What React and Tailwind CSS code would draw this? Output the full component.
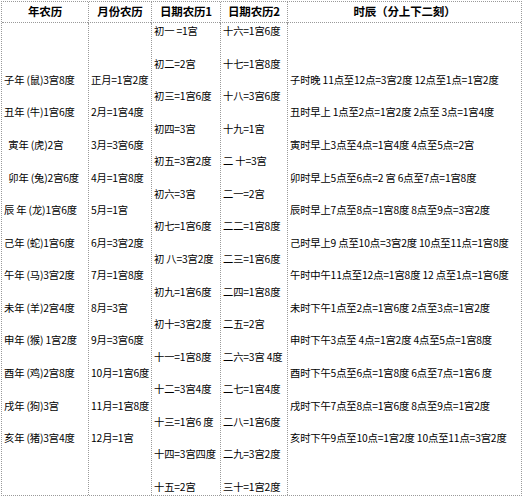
import React from "react";

const col1 = [
  "子年 (鼠)3宫8度",
  "丑年 (牛)1宫6度",
  "  寅年 (虎)2宫",
  "  卯年 (兔)2宫6度",
  "辰 年 (龙)1宫6度",
  "己年 (蛇)1宫6度",
  "午年 (马)3宫2度",
  "未年 (羊)2宫4度",
  "申年 (猴) 1宫2度",
  "酉年 (鸡)2宫8度",
  "戌年 (狗)3宫",
  "亥年 (猪)3宫4度",
];
const col2 = [
  "正月=1宫2度",
  "2月=1宫4度",
  "3月=3宫6度",
  "4月=1宫8度",
  "5月=1宫",
  "6月=3宫2度",
  "7月=1宫8度",
  "8月=3宫",
  "9月=3宫6度",
  "10月=1宫6度",
  "11月=1宫8度",
  "12月=1宫",
];
const col3 = [
  "初一 =1宫",
  "初二=2宫",
  "初三=1宫6度",
  "初四=3宫",
  "初五=3宫2度",
  "初六=3宫",
  "初七=1宫6度",
  "初 八=3宫2度",
  "初九=1宫6度",
  "初十=3宫2度",
  "十一=1宫8度",
  "十二=3宫4度",
  "十三=1宫6 度",
  "十四=3宫四度",
  "十五=2宫",
];
const col4 = [
  "十六=1宫6度",
  "十七=1宫8度",
  "十八=3宫6度",
  "十九=1宫",
  "二 十=3宫",
  "二一=2宫",
  "二二=1宫8度",
  "二三=1宫6度",
  "二四=1宫8度",
  "二五=2宫",
  "二六=3宫 4度",
  "二七=1宫4度",
  "二八=1宫6度",
  "二九=3宫2度",
  "三十=1宫2度",
];
const col5 = [
  "子时晚 11点至12点=3宫2度 12点至1点=1宫2度",
  "丑时早上 1点至2点=1宫2度 2点至 3点=1宫4度",
  "寅时早上3点至4点=1宫4度 4点至5点=2宫",
  "卯时早上5点至6点=2 宫 6点至7点=1宫8度",
  "辰时早上7点至8点=1宫8度 8点至9点=3宫2度",
  "己时早上9 点至10点=3宫2度 10点至11点=1宫8度",
  "午时中午11点至12点=1宫8度 12 点至1点=1宫6度",
  "未时下午1点至2点=1宫6度 2点至3点=1宫2度",
  "申时下午3点至 4点=1宫2度 4点至5点=1宫8度",
  "酉时下午5点至6点=1宫8度 6点至7点=1宫6 度",
  "戌时下午7点至8点=1宫6度 8点至9点=1宫2度",
  "亥时下午9点至10点=1宫2度 10点至11点=3宫2度",
];

function Centered({ items, first }) {
  return (
    <div
      className={
        "flex flex-col justify-center gap-[16.6px] px-[2px] " +
        (first ? "" : "border-l border-dotted border-[#9a9a9a]")
      }
    >
      {items.map((t, i) => (
        <div key={i} className="h-[16px] leading-[16px] whitespace-pre">
          {t}
        </div>
      ))}
    </div>
  );
}

function Filled({ items }) {
  return (
    <div className="flex flex-col justify-between px-[2px] border-l border-dotted border-[#9a9a9a]">
      {items.map((t, i) => (
        <div key={i} className="h-[16px] leading-[16px] whitespace-pre">
          {t}
        </div>
      ))}
    </div>
  );
}

function Head({ children, first }) {
  return (
    <div
      className={
        "flex items-center justify-center font-bold text-[11.5px] border-b border-dotted border-[#9a9a9a] " +
        (first ? "" : "border-l")
      }
    >
      {children}
    </div>
  );
}

export default function App() {
  return (
    <div
      className="w-[525px] h-[500px] bg-white text-black pt-[1px] pl-[1px]"
      style={{ fontFamily: '"Noto Sans CJK SC", "Noto Sans", sans-serif' }}
    >
      <div className="w-[521px] border border-dotted border-[#9a9a9a] grid grid-cols-[86px_63px_69px_67px_234px] grid-rows-[21px_472px] text-[10.3px] tracking-[-0.15px]">
        <Head first>年农历</Head>
        <Head>月份农历</Head>
        <Head>日期农历1</Head>
        <Head>日期农历2</Head>
        <Head>时辰（分上下二刻）</Head>
        <Centered items={col1} first />
        <Centered items={col2} />
        <Filled items={col3} />
        <Filled items={col4} />
        <Centered items={col5} />
      </div>
    </div>
  );
}
